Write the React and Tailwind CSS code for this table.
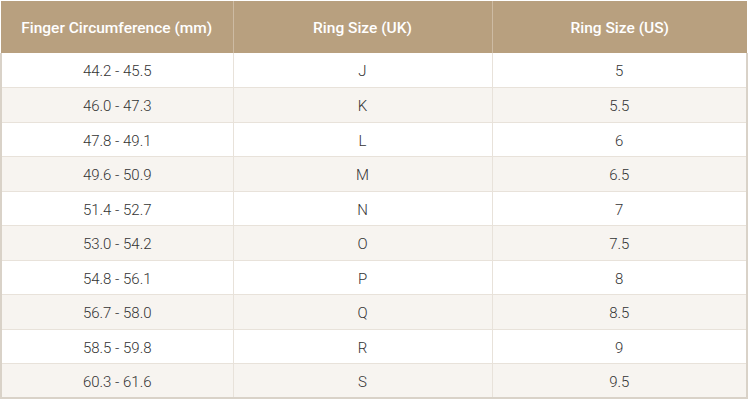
const rows = [
  ["44.2 - 45.5", "J", "5"],
  ["46.0 - 47.3", "K", "5.5"],
  ["47.8 - 49.1", "L", "6"],
  ["49.6 - 50.9", "M", "6.5"],
  ["51.4 - 52.7", "N", "7"],
  ["53.0 - 54.2", "O", "7.5"],
  ["54.8 - 56.1", "P", "8"],
  ["56.7 - 58.0", "Q", "8.5"],
  ["58.5 - 59.8", "R", "9"],
  ["60.3 - 61.6", "S", "9.5"],
];

export default function App() {
  return (
    <div className="w-[750px] h-[402px] bg-white pt-[1px] font-['Roboto',sans-serif]">
      <table className="w-[748px] border-collapse table-fixed">
        <thead>
          <tr className="bg-[#b8a07f] h-[52px]">
            <th className="w-[232px] pt-[3px] text-white text-[15.5px] font-medium border-r border-[#cdbba3] text-center">Finger Circumference (mm)</th>
            <th className="w-[259px] pt-[3px] text-white text-[15.5px] font-medium border-r border-[#cdbba3] text-center">Ring Size (UK)</th>
            <th className="pt-[3px] text-white text-[15.5px] font-medium text-center">Ring Size (US)</th>
          </tr>
        </thead>
        <tbody className="border-l-2 border-r-2 border-b-2 border-[#d9d2c8]">
          {rows.map((r, i) => (
            <tr key={i} className={`h-[34.5px] border-b border-[#e8e2da] ${i % 2 ? "bg-[#f7f4f0]" : "bg-white"}`}>
              {r.map((c, j) => (
                <td key={j} className={`pt-[3px] text-center text-[15px] font-light text-[#333333] ${j < 2 ? "border-r border-[#e8e2da]" : ""}`}>{c}</td>
              ))}
            </tr>
          ))}
        </tbody>
      </table>
    </div>
  );
}
